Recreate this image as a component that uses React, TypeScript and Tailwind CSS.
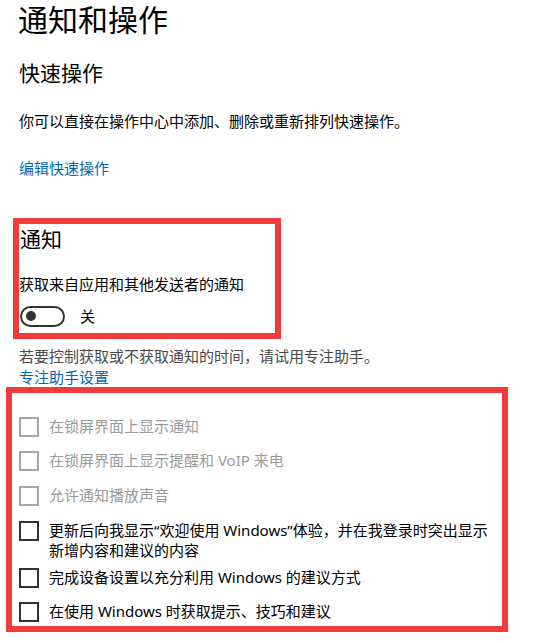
import React from "react";

const Check = ({ disabled }: { disabled?: boolean }) => (
  <div
    className={`w-[20px] h-[20px] shrink-0 border-2 bg-white ${
      disabled ? "border-[#a6a6a6]" : "border-[#333333]"
    }`}
  />
);

const Row = ({
  disabled,
  className,
  children,
}: {
  disabled?: boolean;
  className?: string;
  children: React.ReactNode;
}) => (
  <div className={`flex items-start gap-[10px] ${className ?? ""}`}>
    <Check disabled={disabled} />
    <div
      className={`text-[15px] leading-[20px] -mt-[1px] ${
        disabled ? "text-[#9a9a9a]" : "text-black"
      }`}
    >
      {children}
    </div>
  </div>
);

export default function App() {
  return (
    <div className="w-[539px] h-[643px] bg-white overflow-hidden font-['Noto_Sans','Noto_Sans_CJK_SC',sans-serif] text-black">
      <div className="pl-[18px] text-[30px] leading-[40px] font-normal">通知和操作</div>
      <div className="pl-[19px] mt-[18px] text-[21px] leading-[30px]">快速操作</div>
      <div className="pl-[19px] mt-[22px] text-[15px] leading-[22px]">
        你可以直接在操作中心中添加、删除或重新排列快速操作。
      </div>
      <div className="pl-[19px] mt-[25px] text-[15px] leading-[22px] text-[#0067b8]">
        编辑快速操作
      </div>

      <div className="ml-[13px] mt-[39px] w-[268px] border-[6px] border-[#f03c3c] pb-[6px]">
        <div className="pl-[1px] text-[21px] leading-[30px]">通知</div>
        <div className="mt-[19px] text-[15px] leading-[22px]">获取来自应用和其他发送者的通知</div>
        <div className="mt-[10px] flex items-center gap-[15px]">
          <div className="ml-[1px] w-[45px] h-[21px] rounded-full border-2 border-[#333333] flex items-center pl-[4px]">
            <div className="w-[10px] h-[10px] rounded-full bg-[#333333]" />
          </div>
          <div className="text-[15px] leading-[22px]">关</div>
        </div>
      </div>

      <div className="pl-[19px] mt-[7px] text-[15px] leading-[21px] text-[#4a4a4a]">
        若要控制获取或不获取通知的时间，请试用专注助手。
      </div>
      <div className="pl-[19px] text-[15px] leading-[21px] text-[#0067b8]">专注助手设置</div>

      <div className="ml-[6px] mt-[-1px] w-[502px] border-[6px] border-[#f03c3c] pl-[7px] pt-[24px] pb-[4px]">
        <Row disabled>在锁屏界面上显示通知</Row>
        <Row disabled className="mt-[14px]">
          在锁屏界面上显示提醒和 VoIP 来电
        </Row>
        <Row disabled className="mt-[15px]">
          允许通知播放声音
        </Row>
        <Row className="mt-[15px]">
          更新后向我显示“欢迎使用 Windows”体验，并在我登录时突出显示
          <br />
          新增内容和建议的内容
        </Row>
        <Row className="mt-[8px]">完成设备设置以充分利用 Windows 的建议方式</Row>
        <Row className="mt-[14px]">在使用 Windows 时获取提示、技巧和建议</Row>
      </div>
    </div>
  );
}
